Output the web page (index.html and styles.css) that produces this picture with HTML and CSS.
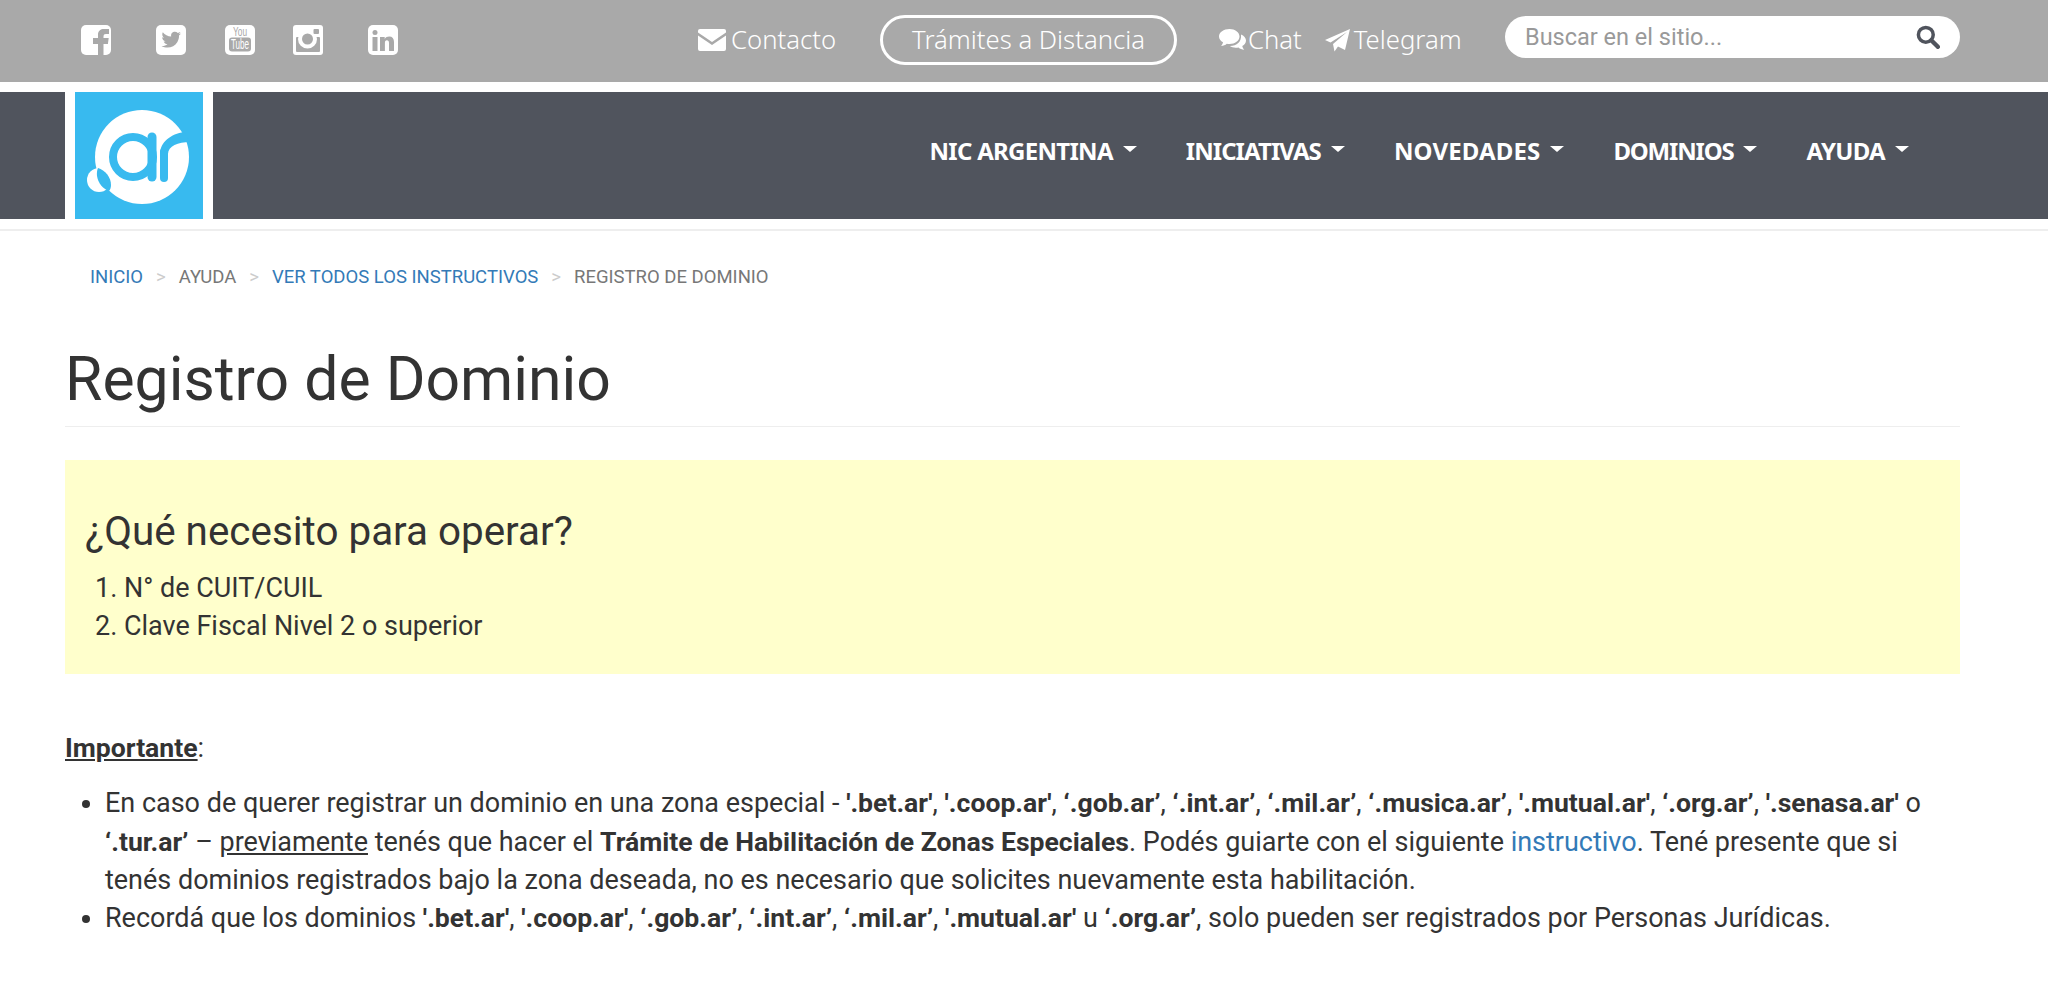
FILE: index.html
```html
<!doctype html>
<html lang="es">
  <head>
    <meta charset="UTF-8" />
    <meta name="viewport" content="width=device-width, initial-scale=1.0" />
    <title>Registro de Dominio</title>
    <link rel="stylesheet" href="styles.css">
  </head>
  <body>
    <div class="topbar">
      <div class="social">
        <a href="#" class="social-icon">
          <svg viewBox="0 0 30 30"><rect width="30" height="30" rx="5" fill="#fff"/><path d="M17 30V19h-5v-6h5V9.500C17 6 19.500 4 23 4h5v5h-3c-1.800 0-2.500.8-2.500 2.500V13h5.200l-.8 6h-4.400v11z" fill="#a9a9a9"/></svg>
        </a>
        <a href="#" class="social-icon tw">
          <svg viewBox="0 0 30 30"><rect width="30" height="30" rx="5" fill="#fff"/><path d="M25 8.500c-.8.4-1.600.6-2.400.7.900-.5 1.500-1.300 1.800-2.300-.8.500-1.700.8-2.600 1-1.700-1.800-4.500-1.600-5.900.2-.8 1-1 2.200-.7 3.400-3.400-.2-6.400-1.800-8.400-4.300-1.100 1.900-.5 4.300 1.300 5.500-.7 0-1.300-.2-1.900-.5 0 2 1.400 3.700 3.300 4.100-.6.200-1.200.2-1.800.1.500 1.600 2 2.800 3.800 2.800-1.700 1.300-3.800 1.900-6 1.700 5.500 3.400 12.600 1.600 15.900-3.900 1.200-2 1.700-4.200 1.600-6.400.8-.6 1.500-1.300 2-2.100z" fill="#a9a9a9"/></svg>
        </a>
        <a href="#" class="social-icon yt">
          <svg viewBox="0 0 30 30"><rect width="30" height="30" rx="5" fill="#fff"/><text x="8" y="11" class="yt-you" textLength="14" lengthAdjust="spacingAndGlyphs">You</text><rect x="4" y="12.500" width="22" height="14" rx="3" fill="#a9a9a9"/><text x="6" y="24" class="yt-tube" textLength="18" lengthAdjust="spacingAndGlyphs">Tube</text></svg>
        </a>
        <a href="#" class="social-icon ig">
          <svg viewBox="0 0 30 30"><rect width="30" height="30" rx="3" fill="#fff"/><rect x="3" y="12" width="24" height="15" rx="1" fill="#a9a9a9"/><circle cx="14.500" cy="14" r="9.500" fill="#fff"/><circle cx="14.500" cy="14" r="5.500" fill="#a9a9a9"/><rect x="20.500" y="4" width="5.500" height="5" rx="1" fill="#a9a9a9"/></svg>
        </a>
        <a href="#" class="social-icon in">
          <svg viewBox="0 0 30 30"><rect width="30" height="30" rx="5" fill="#fff"/><circle cx="7" cy="7.500" r="2.500" fill="#a9a9a9"/><rect x="4.500" y="12" width="5" height="14" fill="#a9a9a9"/><path d="M12 12h4.700v2c1-1.600 2.600-2.400 4.500-2.400 3.200 0 4.800 2 4.800 5.500V26h-5v-8c0-1.800-.7-2.700-2.100-2.700s-2 1-2 2.700v8H12z" fill="#a9a9a9"/></svg>
        </a>
      </div>
      <div class="top-links">
        <a href="#" class="top-link contact">
          <svg class="top-icon" width="28" height="22" viewBox="0 0 28 22"><path d="M2 0h24a2 2 0 0 1 2 2v1.500L14 13 0 3.500V2a2 2 0 0 1 2-2z" fill="#fff"/><path d="M0 6.500l14 9.500 14-9.500V20a2 2 0 0 1-2 2H2a2 2 0 0 1-2-2z" fill="#fff"/></svg>
          Contacto
        </a>
        <a href="#" class="tramites">Trámites a Distancia</a>
        <a href="#" class="top-link chat">
          <svg class="top-icon" width="27" height="22" viewBox="0 0 27 22"><path d="M10.500 0C16 0 20.500 3.200 20.500 7.500S16 15 10.500 15c-1 0-1.800-.1-2.700-.3C6.300 16 4.500 16.800 2 17c1-1 1.800-2.300 2-3.700C1.600 12 0 9.900 0 7.500 0 3.200 4.700 0 10.500 0z" fill="#fff"/><path d="M22 5.500c2.900 1.200 5 3.400 5 6 0 2.300-1.500 4.300-3.700 5.500.2 1.400 1 2.700 2 3.700-2.500-.2-4.300-1-5.800-2.300-.9.200-1.800.3-2.700.3-2.300 0-4.400-.6-6-1.700 6.500.2 12-3.800 11.200-11.500z" fill="#fff"/></svg>
          Chat
        </a>
        <a href="#" class="top-link telegram">
          <svg class="top-icon" width="25" height="23" viewBox="0 0 25 23"><path d="M25 0L20 21l-7-3.500-3.500 5-1.500-7.500L22 3 5.500 13.500 0 11z" fill="#fff"/></svg>
          Telegram
        </a>
      </div>
      <form class="search">
        <input class="search-input" type="text" placeholder="Buscar en el sitio...">
        <svg class="search-icon" width="24" height="24" viewBox="0 0 22 22"><circle cx="9" cy="9" r="6.800" fill="none" stroke="#50545d" stroke-width="3.200"/><path d="M14 14l6 6" stroke="#50545d" stroke-width="4" stroke-linecap="round"/></svg>
      </form>
    </div>

    <nav class="mainnav">
      <a href="#" class="logo">
        <svg width="128" height="127" viewBox="0 0 128 127">
          <rect width="128" height="127" fill="#38baef"/>
          <circle cx="67" cy="65" r="47" fill="#fff"/>
          <circle cx="58" cy="65" r="20" fill="none" stroke="#38baef" stroke-width="8"/>
          <path d="M77 45v40" stroke="#38baef" stroke-width="9" stroke-linecap="round"/>
          <path d="M89 86V60" stroke="#38baef" stroke-width="8" stroke-linecap="round"/>
          <path d="M85 62C85 50 96 42 109 40L115 50C103 50 93 54 93 62z" fill="#38baef"/>
          <circle cx="24" cy="88" r="12" fill="#fff"/>
          <path d="M23 76c7 2 13 9 13 17 0 3-1 5-2 6-6-2-11-8-12-15-.3-3 0-6 1-8z" fill="#38baef"/>
        </svg>
      </a>
      <ul class="menu">
        <li><a href="#" class="menu-link">NIC ARGENTINA</a></li>
        <li><a href="#" class="menu-link">INICIATIVAS</a></li>
        <li><a href="#" class="menu-link">NOVEDADES</a></li>
        <li><a href="#" class="menu-link">DOMINIOS</a></li>
        <li><a href="#" class="menu-link">AYUDA</a></li>
      </ul>
    </nav>
    <div class="nav-line"></div>

    <div class="container">
      <ol class="breadcrumb">
        <li><a href="#">Inicio</a></li>
        <li>Ayuda</li>
        <li><a href="#">Ver todos los instructivos</a></li>
        <li>Registro de Dominio</li>
      </ol>

      <h1 class="page-title">Registro de Dominio</h1>

      <div class="notice">
        <h2>¿Qué necesito para operar?</h2>
        <ol>
          <li>N° de CUIT/CUIL</li>
          <li>Clave Fiscal Nivel 2 o superior</li>
        </ol>
      </div>

      <p class="important"><u><strong>Importante</strong></u>:</p>
      <ul class="notes">
        <li>En caso de querer registrar un dominio en una zona especial - <strong>'.bet.ar'</strong>, <strong>'.coop.ar'</strong>, <strong>‘.gob.ar’</strong>, <strong>‘.int.ar’</strong>, <strong>‘.mil.ar’</strong>, <strong>‘.musica.ar’</strong>, <strong>'.mutual.ar'</strong>, <strong>‘.org.ar’</strong>, <strong>'.senasa.ar'</strong> o <strong>‘.tur.ar’</strong> – <u>previamente</u> tenés que hacer el <strong>Trámite de Habilitación de Zonas Especiales</strong>. Podés guiarte con el siguiente <a href="#">instructivo</a>. Tené presente que si tenés dominios registrados bajo la zona deseada, no es necesario que solicites nuevamente esta habilitación.</li>
        <li>Recordá que los dominios <strong>'.bet.ar'</strong>, <strong>'.coop.ar'</strong>, <strong>‘.gob.ar’</strong>, <strong>‘.int.ar’</strong>, <strong>‘.mil.ar’</strong>, <strong>'.mutual.ar'</strong> u <strong>‘.org.ar’</strong>, solo pueden ser registrados por Personas Jurídicas.</li>
      </ul>
    </div>
  </body>
</html>
```

FILE: styles.css
```css
body {
  margin: 0;
  padding: 0;
  font-family: Roboto, sans-serif;
  font-size: 26.97px;
  line-height: 38.4px;
  color: #333;
  background-color: #fff;
}
a {
  color: #337ab7;
  text-decoration: none;
}
strong {
  font-size: 26.58px;
}

/* Top bar */
.topbar {
  display: flex;
  align-items: center;
  height: 82px;
  background-color: #a9a9a9;
  padding-left: 81px;
  box-sizing: border-box;
}
.social {
  display: flex;
  width: 617px;
}
.social-icon {
  display: block;
  width: 30px;
  height: 30px;
  margin-right: 45px;
  margin-top: -2px;
}
.social-icon.tw { margin-right: 39px; }
.social-icon.yt { margin-right: 38px; }
.social-icon svg {
  display: block;
  overflow: visible;
}
.yt-you {
  font-family: "Liberation Sans", sans-serif;
  font-size: 12px;
  fill: #a9a9a9;
}
.yt-tube {
  font-family: "Liberation Sans", sans-serif;
  font-size: 14px;
  fill: #fff;
}
.top-links {
  display: flex;
  align-items: center;
  margin-top: -2px;
  font-family: "Noto Sans", sans-serif;
  font-size: 25.7px;
  font-weight: 300;
}
.top-link {
  display: flex;
  align-items: center;
  color: #fff;
}
.top-icon {
  margin-right: 4px;
}
.contact .top-icon {
  margin-right: 5px;
}
.chat .top-icon {
  margin-right: 2px;
}
.tramites {
  color: #fff;
  border: 3px solid #fff;
  border-radius: 25px;
  padding: 3px 29px;
  margin: 0 42px 0 44px;
}
.telegram {
  margin-left: 23px;
}
.search {
  display: flex;
  align-items: center;
  width: 455px;
  height: 42px;
  margin-left: auto;
  margin-right: 88px;
  margin-top: -8px;
  background-color: #fff;
  border-radius: 21px;
  box-sizing: border-box;
  padding: 0 20px 0 20px;
}
.search-input {
  flex-grow: 1;
  border: none;
  outline: none;
  padding: 0;
  background: transparent;
  font-family: Roboto, sans-serif;
  font-size: 23.5px;
  color: #333;
}
.search-input::placeholder {
  color: #999;
}

/* Main navigation */
.mainnav {
  display: flex;
  justify-content: space-between;
  height: 127px;
  margin-top: 10px;
  background-color: #50545d;
}
.logo {
  display: block;
  margin-left: 65px;
  padding: 0 10px;
  background-color: #fff;
  height: 127px;
}
.logo svg {
  display: block;
}
.menu {
  display: flex;
  list-style: none;
  margin: 0;
  padding: 0 139px 0 0;
  height: 118px;
  align-items: center;
}
.menu li {
  margin-left: 49px;
}
.menu-link {
  display: flex;
  align-items: center;
  color: #fff;
  font-family: "Noto Sans", sans-serif;
  font-size: 24px;
  font-weight: 700;
  letter-spacing: -0.7px;
}
.menu li:nth-child(2) .menu-link { letter-spacing: -0.95px; }
.menu li:nth-child(3) .menu-link { letter-spacing: 0.15px; }
.menu li:nth-child(4) .menu-link { letter-spacing: -1.2px; }
.menu-link::after {
  content: '';
  margin-left: 10px;
  margin-bottom: 4px;
  border-top: 6px solid #fff;
  border-left: 7px solid transparent;
  border-right: 7px solid transparent;
}
.nav-line {
  height: 2px;
  margin-top: 10px;
  background-color: #eee;
}

/* Page content */
.container {
  margin: 0 88px 0 65px;
}
.breadcrumb {
  display: flex;
  list-style: none;
  margin: 0;
  padding: 32px 0 0 25px;
  font-size: 18.5px;
  line-height: 28px;
  text-transform: uppercase;
  color: #777;
}
.breadcrumb li + li::before {
  content: '>';
  padding: 0 13px;
  color: #ccc;
}
.page-title {
  margin: 55px 0 33px;
  padding-bottom: 13px;
  border-bottom: 1px solid #eee;
  font-size: 60.7px;
  font-weight: 400;
  line-height: 67px;
}
.notice {
  background-color: #ffc;
  padding: 50px 20px 28px;
  margin-bottom: 55px;
}
.notice h2 {
  margin: 0 0 15px;
  font-size: 40.4px;
  font-weight: 400;
  line-height: 44px;
}
.notice ol {
  margin: 0;
  padding-left: 39px;
}
.important {
  margin: 0 0 17px;
}
.notes {
  margin: 0;
  padding-left: 40px;
}
```
